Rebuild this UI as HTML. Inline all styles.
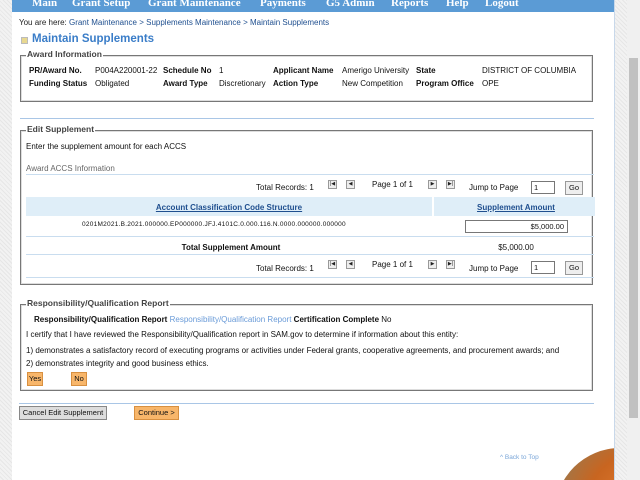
<!DOCTYPE html>
<html style="overflow:hidden"><head><style>
html,body{overflow:hidden}
body{margin:0;width:640px;height:480px;overflow:hidden;position:relative;font-family:"Liberation Sans",Verdana,sans-serif;font-size:8px;color:#111;background:repeating-linear-gradient(45deg,#f2f2f2 0 2px,#e6e6e6 2px 3px);}
.a{position:absolute;white-space:nowrap}
#main{position:absolute;left:12px;top:0;width:602px;height:480px;background:#fff;border-right:1px solid #c8d8ea;overflow:hidden}
#nav{position:absolute;left:12px;top:0;width:602px;height:12px;background:#5b9bd5;overflow:hidden}
#nav span{position:absolute;top:-3px;color:#fff;font-weight:bold;font-size:11px;font-family:"Liberation Serif",serif}
#sb{position:absolute;left:627px;top:0;width:13px;height:480px;background:#f0f0f0}
.fs{position:absolute;border:1px solid #777;box-shadow:0 0 0 1px #ddd inset}
.lg{position:absolute;background:#fff;padding:0 1px;font-size:8.5px;font-weight:bold;color:#444}
b{font-weight:bold}
.ln{position:absolute;height:1px;background:#c9ddef}
.ic{position:absolute;width:7px;height:7px;border:1px solid #999;background:#eee;font-size:5px;line-height:7px;text-align:center;color:#222}
.inp{position:absolute;border:1px solid #777;background:#fff;font-size:7.5px}
.btn{position:absolute;border:1px solid #999;font-size:7.5px;text-align:center;line-height:12px}
.or{background:#f8b66a;border-color:#d89040}
</style></head><body>
<div id="main"><div style="position:absolute;left:543px;top:448px;width:130px;height:32px;overflow:hidden"><div style="width:130px;height:130px;border-radius:50%;background:radial-gradient(circle at 60% 40%,#e07a30,#c86520 40%,#9a7a50 75%,#d9b070)"></div></div></div>
<div id="nav"><span style="left:20px">Main</span><span style="left:60px">Grant Setup</span><span style="left:136px">Grant Maintenance</span><span style="left:248px">Payments</span><span style="left:314px">G5 Admin</span><span style="left:379px">Reports</span><span style="left:434px">Help</span><span style="left:473px">Logout</span></div>
<div id="sb"><div style="position:absolute;left:2px;top:58px;width:9px;height:360px;background:#c1c1c1"></div></div>
<div class="a" style="left:19px;top:18px;color:#222">You are here: <span style="color:#1f4f8f">Grant Maintenance &gt; Supplements Maintenance &gt; Maintain Supplements</span></div>
<div class="a" style="left:21px;top:37px;width:5px;height:5px;background:#e8d890;border:1px solid #bbb"></div>
<div class="a" style="left:32px;top:33px;font-size:11.5px;font-weight:bold;color:#3a7dc8">Maintain Supplements</div>

<div class="fs" style="left:20px;top:55px;width:571px;height:45px"></div>
<div class="lg" style="left:26px;top:49px">Award Information</div>
<div class="a" style="left:29px;top:66px"><b>PR/Award No.</b></div><div class="a" style="left:95px;top:66px">P004A220001-22</div>
<div class="a" style="left:163px;top:66px"><b>Schedule No</b></div><div class="a" style="left:219px;top:66px">1</div>
<div class="a" style="left:273px;top:66px"><b>Applicant Name</b></div><div class="a" style="left:342px;top:66px">Amerigo University</div>
<div class="a" style="left:416px;top:66px"><b>State</b></div><div class="a" style="left:482px;top:66px">DISTRICT OF COLUMBIA</div>
<div class="a" style="left:29px;top:79px"><b>Funding Status</b></div><div class="a" style="left:95px;top:79px">Obligated</div>
<div class="a" style="left:163px;top:79px"><b>Award Type</b></div><div class="a" style="left:219px;top:79px">Discretionary</div>
<div class="a" style="left:273px;top:79px"><b>Action Type</b></div><div class="a" style="left:342px;top:79px">New Competition</div>
<div class="a" style="left:416px;top:79px"><b>Program Office</b></div><div class="a" style="left:482px;top:79px">OPE</div>

<div class="ln" style="left:20px;top:118px;width:574px;background:#a9c6e6"></div>

<div class="fs" style="left:20px;top:130px;width:571px;height:153px"></div>
<div class="lg" style="left:26px;top:124px">Edit Supplement</div>
<div class="a" style="left:26px;top:142px">Enter the supplement amount for each ACCS</div>
<div class="a" style="left:26px;top:164px;color:#666">Award ACCS Information</div>
<div class="ln" style="left:26px;top:174px;width:568px"></div>
<div class="a" style="left:256px;top:183px">Total Records: 1</div>
<div class="ic" style="left:328px;top:180px">|◀</div><div class="ic" style="left:346px;top:180px">◀</div>
<div class="a" style="left:372px;top:180px">Page 1 of 1</div>
<div class="ic" style="left:428px;top:180px">▶</div><div class="ic" style="left:446px;top:180px">▶|</div>
<div class="a" style="left:469px;top:183px">Jump to Page</div>
<div class="inp" style="left:531px;top:181px;width:20px;height:11px;padding-left:2px;line-height:11px">1</div>
<div class="btn" style="left:565px;top:181px;width:16px;background:#eee">Go</div>
<div class="a" style="left:26px;top:197px;width:406px;height:19px;background:#dfeef8"></div>
<div class="a" style="left:434px;top:197px;width:161px;height:19px;background:#dfeef8"></div>
<div class="a" style="left:26px;top:203px;width:406px;text-align:center;color:#1f4f8f;font-weight:bold;text-decoration:underline">Account Classification Code Structure</div>
<div class="a" style="left:434px;top:203px;width:164px;text-align:center;color:#1f4f8f;font-weight:bold;text-decoration:underline">Supplement Amount</div>
<div class="a" style="left:82px;top:221px;font-size:6.5px;letter-spacing:0.25px">0201M2021.B.2021.000000.EP000000.JFJ.4101C.0.000.116.N.0000.000000.000000</div>
<div class="inp" style="left:465px;top:220px;width:98px;height:11px;text-align:right;padding-right:3px;line-height:11px">$5,000.00</div>
<div class="ln" style="left:26px;top:236px;width:568px"></div>
<div class="a" style="left:26px;top:243px;width:410px;text-align:center"><b>Total Supplement Amount</b></div>
<div class="a" style="left:434px;top:243px;width:164px;text-align:center">$5,000.00</div>
<div class="ln" style="left:26px;top:254px;width:568px"></div>
<div class="a" style="left:256px;top:264px">Total Records: 1</div>
<div class="ic" style="left:328px;top:260px">|◀</div><div class="ic" style="left:346px;top:260px">◀</div>
<div class="a" style="left:372px;top:260px">Page 1 of 1</div>
<div class="ic" style="left:428px;top:260px">▶</div><div class="ic" style="left:446px;top:260px">▶|</div>
<div class="a" style="left:469px;top:264px">Jump to Page</div>
<div class="inp" style="left:531px;top:261px;width:20px;height:11px;padding-left:2px;line-height:11px">1</div>
<div class="btn" style="left:565px;top:261px;width:16px;background:#eee">Go</div>
<div class="ln" style="left:26px;top:277px;width:568px"></div>

<div class="fs" style="left:20px;top:304px;width:571px;height:85px"></div>
<div class="lg" style="left:26px;top:298px">Responsibility/Qualification Report</div>
<div class="a" style="left:34px;top:315px"><b>Responsibility/Qualification Report</b> <span style="color:#6a9bd8">Responsibility/Qualification Report</span> <b>Certification Complete</b> No</div>
<div class="a" style="left:26px;top:330px">I certify that I have reviewed the Responsibility/Qualification report in SAM.gov to determine if information about this entity:</div>
<div class="a" style="left:26px;top:346px">1) demonstrates a satisfactory record of executing programs or activities under Federal grants, cooperative agreements, and procurement awards; and</div>
<div class="a" style="left:26px;top:359px">2) demonstrates integrity and good business ethics.</div>
<div class="btn or" style="left:27px;top:372px;width:14px">Yes</div>
<div class="btn or" style="left:71px;top:372px;width:14px">No</div>

<div class="ln" style="left:19px;top:403px;width:575px;background:#a9c6e6"></div>
<div class="btn" style="left:19px;top:406px;width:86px;background:#ddd;border-color:#888">Cancel Edit Supplement</div>
<div class="btn or" style="left:134px;top:406px;width:43px">Continue &gt;</div>
<div class="a" style="left:500px;top:454px;color:#7aa6d8;font-size:6.5px">^ Back to Top</div>
</body></html>
